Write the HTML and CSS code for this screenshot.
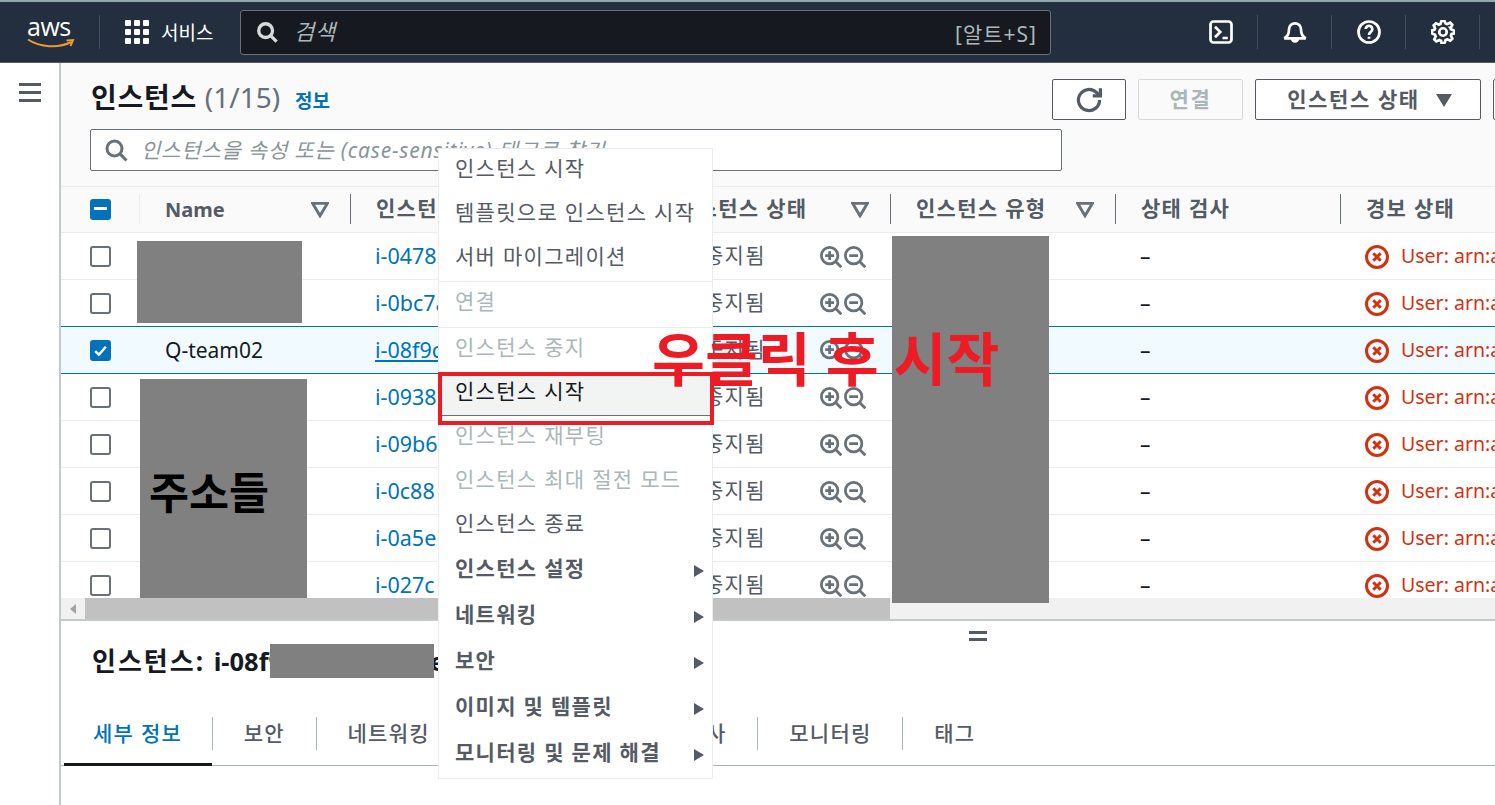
FILE: index.html
```html
<!DOCTYPE html>
<html lang="ko">
<head>
  <meta charset="UTF-8" />
  <title>인스턴스 | EC2</title>
  <link rel="stylesheet" href="styles.css">
</head>
<body>
  <svg class="icon-defs" aria-hidden="true">
    <symbol id="i-search" viewBox="0 0 16 16"><circle cx="7" cy="7" r="5" /><path d="M10.6 10.6L15 15" /></symbol>
    <symbol id="i-refresh" viewBox="0 0 16 16"><path d="M14.5 8a6.5 6.5 0 1 1-1.9-4.6L14.5 5" /><path d="M15 .8V5.5h-4.7" /></symbol>
    <symbol id="i-term" viewBox="0 0 16 16"><rect x="1" y="1" width="14" height="14" rx="2" /><path d="M4 4.500L7.500 8 4 11.500M9 12h3.500" /></symbol>
    <symbol id="i-bell" viewBox="0 0 16 16"><path d="M.8 12.200c2.200-1 3.200-3 3.200-6a4 4 0 0 1 8 0c0 3 1 5 3.200 6zM6 12.200a2 2 0 1 0 4 0" /></symbol>
    <symbol id="i-help" viewBox="0 0 16 16"><circle cx="8" cy="8" r="7" /><path d="M5.800 6a2.200 2.200 0 1 1 3.400 1.900C8.400 8.500 8 9 8 10M8 11.200v1.300" /></symbol>
    <symbol id="i-gear" viewBox="0 0 16 16"><path d="M13.300 5.200l.9-2-1.400-1.400-2 .9c-.3-.2-.7-.3-1.100-.4L9 .6H7l-.7 2.100c-.4.100-.7.200-1 .4l-2-.9-1.500 1.400.9 2c-.2.3-.3.7-.4 1L.6 7v2l2.100.8c.1.4.2.7.4 1.100l-.9 2 1.400 1.400 2-.9c.3.2.7.3 1.100.4L7 15.400h2l.8-2.100c.4-.1.7-.2 1-.4l2 .9 1.400-1.400-.9-2c.2-.3.3-.7.4-1.100L15.400 9V7l-2.100-.8c-.1-.3-.2-.7-.4-1z" /><circle cx="8" cy="8" r="2.500" /></symbol>
    <symbol id="i-zoom-in" viewBox="0 0 16 16"><circle cx="7" cy="7" r="6" /><path d="M11.500 11.500L15.500 15.500M7 3.800v6.400M3.800 7h6.400" /></symbol>
    <symbol id="i-zoom-out" viewBox="0 0 16 16"><circle cx="7" cy="7" r="6" /><path d="M11.500 11.500L15.500 15.500M3.800 7h6.400" /></symbol>
    <symbol id="i-error" viewBox="0 0 16 16"><circle cx="8" cy="8" r="7" /><path d="M5.500 5.500l5 5M10.500 5.500l-5 5" /></symbol>
    <symbol id="i-filter" viewBox="0 0 16 16"><path d="M1.500 3h13L8 14z" /></symbol>
  </svg>

  <nav class="topbar">
    <a class="logo">
      <span class="logo-text">aws</span>
      <svg class="logo-smile" viewBox="0 0 48 12"><path d="M1 1.500C13 9.500 32 10.500 44 4" /><path d="M39.500 2.500L46 2l-2.500 6" /></svg>
    </a>
    <span class="nav-sep"></span>
    <a class="services">
      <span class="dots"><i></i><i></i><i></i><i></i><i></i><i></i><i></i><i></i><i></i></span>
      <span>서비스</span>
    </a>
    <div class="global-search">
      <svg class="ico ico-22 stroke-light"><use href="#i-search" /></svg>
      <span class="global-search-text">검색</span>
      <span class="shortcut">[알트+S]</span>
    </div>
    <div class="nav-icons">
      <span class="nav-icon"><svg class="ico ico-24"><use href="#i-term" /></svg></span>
      <span class="nav-icon"><svg class="ico ico-24"><use href="#i-bell" /></svg></span>
      <span class="nav-icon"><svg class="ico ico-24"><use href="#i-help" /></svg></span>
      <span class="nav-icon"><svg class="ico ico-24"><use href="#i-gear" /></svg></span>
    </div>
  </nav>

  <div class="layout">
    <aside class="side">
      <span class="burger"><i></i><i></i><i></i></span>
    </aside>

    <main class="main">
      <section class="list-head">
        <div class="title-row">
          <div class="title-block">
            <h1>인스턴스 <span class="count">(1/15)</span></h1>
            <a class="info">정보</a>
          </div>
          <div class="actions">
            <button class="btn btn-icon"><svg class="ico ico-26 stroke-dark"><use href="#i-refresh" /></svg></button>
            <button class="btn btn-off">연결</button>
            <button class="btn btn-state">인스턴스 상태 <span class="caret"></span></button>
            <button class="btn btn-more"></button>
          </div>
        </div>
        <div class="filter-box">
          <svg class="ico ico-24 stroke-gray"><use href="#i-search" /></svg>
          <span class="filter-text">인스턴스을 속성 또는 (case-sensitive) 태그로 찾기</span>
        </div>
      </section>

      <div class="table-wrap">
        <table class="grid">
          <colgroup>
            <col class="c-check"><col class="c-name"><col class="c-id"><col class="c-state"><col class="c-wide"><col class="c-wide"><col class="c-alarm">
          </colgroup>
          <thead>
            <tr>
              <th><span class="check check-mixed"></span></th>
              <th><div class="th th-light">Name<svg class="ico ico-18 stroke-filter"><use href="#i-filter" /></svg></div></th>
              <th><div class="th">인스턴스 ID</div></th>
              <th><div class="th">인스턴스 상태<svg class="ico ico-18 stroke-filter"><use href="#i-filter" /></svg></div></th>
              <th><div class="th">인스턴스 유형<svg class="ico ico-18 stroke-filter"><use href="#i-filter" /></svg></div></th>
              <th><div class="th">상태 검사</div></th>
              <th><div class="th">경보 상태</div></th>
            </tr>
          </thead>
          <tbody>
            <tr>
              <td><span class="check"></span></td><td class="name"></td><td><a class="link">i-0478</a></td>
              <td><div class="state"><span>중지됨</span><span class="zooms"><svg class="ico ico-22 stroke-gray"><use href="#i-zoom-in" /></svg><svg class="ico ico-22 stroke-gray"><use href="#i-zoom-out" /></svg></span></div></td>
              <td></td><td class="dash">–</td>
              <td><div class="alarm"><svg class="ico ico-24 stroke-red"><use href="#i-error" /></svg>User: arn:aws:sts</div></td>
            </tr>
            <tr>
              <td><span class="check"></span></td><td class="name"></td><td><a class="link">i-0bc7a</a></td>
              <td><div class="state"><span>중지됨</span><span class="zooms"><svg class="ico ico-22 stroke-gray"><use href="#i-zoom-in" /></svg><svg class="ico ico-22 stroke-gray"><use href="#i-zoom-out" /></svg></span></div></td>
              <td></td><td class="dash">–</td>
              <td><div class="alarm"><svg class="ico ico-24 stroke-red"><use href="#i-error" /></svg>User: arn:aws:sts</div></td>
            </tr>
            <tr class="selected">
              <td><span class="check check-on"><svg viewBox="0 0 16 16"><path d="M3 8.500l3.500 3.500L13 4.500" /></svg></span></td><td class="name">Q-team02</td><td><a class="link link-on">i-08f9c0a1</a></td>
              <td><div class="state"><span>중지됨</span><span class="zooms"><svg class="ico ico-22 stroke-gray"><use href="#i-zoom-in" /></svg><svg class="ico ico-22 stroke-gray"><use href="#i-zoom-out" /></svg></span></div></td>
              <td></td><td class="dash">–</td>
              <td><div class="alarm"><svg class="ico ico-24 stroke-red"><use href="#i-error" /></svg>User: arn:aws:sts</div></td>
            </tr>
            <tr>
              <td><span class="check"></span></td><td class="name"></td><td><a class="link">i-0938</a></td>
              <td><div class="state"><span>중지됨</span><span class="zooms"><svg class="ico ico-22 stroke-gray"><use href="#i-zoom-in" /></svg><svg class="ico ico-22 stroke-gray"><use href="#i-zoom-out" /></svg></span></div></td>
              <td></td><td class="dash">–</td>
              <td><div class="alarm"><svg class="ico ico-24 stroke-red"><use href="#i-error" /></svg>User: arn:aws:sts</div></td>
            </tr>
            <tr>
              <td><span class="check"></span></td><td class="name"></td><td><a class="link">i-09b6</a></td>
              <td><div class="state"><span>중지됨</span><span class="zooms"><svg class="ico ico-22 stroke-gray"><use href="#i-zoom-in" /></svg><svg class="ico ico-22 stroke-gray"><use href="#i-zoom-out" /></svg></span></div></td>
              <td></td><td class="dash">–</td>
              <td><div class="alarm"><svg class="ico ico-24 stroke-red"><use href="#i-error" /></svg>User: arn:aws:sts</div></td>
            </tr>
            <tr>
              <td><span class="check"></span></td><td class="name"></td><td><a class="link">i-0c88</a></td>
              <td><div class="state"><span>중지됨</span><span class="zooms"><svg class="ico ico-22 stroke-gray"><use href="#i-zoom-in" /></svg><svg class="ico ico-22 stroke-gray"><use href="#i-zoom-out" /></svg></span></div></td>
              <td></td><td class="dash">–</td>
              <td><div class="alarm"><svg class="ico ico-24 stroke-red"><use href="#i-error" /></svg>User: arn:aws:sts</div></td>
            </tr>
            <tr>
              <td><span class="check"></span></td><td class="name"></td><td><a class="link">i-0a5e</a></td>
              <td><div class="state"><span>중지됨</span><span class="zooms"><svg class="ico ico-22 stroke-gray"><use href="#i-zoom-in" /></svg><svg class="ico ico-22 stroke-gray"><use href="#i-zoom-out" /></svg></span></div></td>
              <td></td><td class="dash">–</td>
              <td><div class="alarm"><svg class="ico ico-24 stroke-red"><use href="#i-error" /></svg>User: arn:aws:sts</div></td>
            </tr>
            <tr>
              <td><span class="check"></span></td><td class="name"></td><td><a class="link">i-027c</a></td>
              <td><div class="state"><span>중지됨</span><span class="zooms"><svg class="ico ico-22 stroke-gray"><use href="#i-zoom-in" /></svg><svg class="ico ico-22 stroke-gray"><use href="#i-zoom-out" /></svg></span></div></td>
              <td></td><td class="dash">–</td>
              <td><div class="alarm"><svg class="ico ico-24 stroke-red"><use href="#i-error" /></svg>User: arn:aws:sts</div></td>
            </tr>
          </tbody>
        </table>
      </div>

      <div class="hscroll">
        <span class="hscroll-btn"><i></i></span>
        <span class="hscroll-thumb"></span>
      </div>

      <section class="detail">
        <div class="drag"><i></i><i></i></div>
        <h2>인스턴스: <span class="detail-id">i-08f9c0a1b2c3d4e5f</span></h2>
        <div class="tabs">
          <a class="tab tab-on">세부 정보</a>
          <a class="tab">보안</a>
          <a class="tab">네트워킹</a>
          <a class="tab">스토리지</a>
          <a class="tab">상태 검사</a>
          <a class="tab">모니터링</a>
          <a class="tab">태그</a>
        </div>
        <h3>인스턴스 요약 정보</h3>
      </section>
    </main>
  </div>

  <div class="mask mask-a"></div>
  <div class="mask mask-b">주소들</div>
  <div class="mask mask-c"></div>
  <div class="mask mask-d"></div>

  <ul class="menu">
    <li>인스턴스 시작</li>
    <li>템플릿으로 인스턴스 시작</li>
    <li>서버 마이그레이션</li>
    <li class="sep off">연결</li>
    <li class="sep sep-short off">인스턴스 중지</li>
    <li class="hover">인스턴스 시작</li>
    <li class="off">인스턴스 재부팅</li>
    <li class="off">인스턴스 최대 절전 모드</li>
    <li>인스턴스 종료</li>
    <li class="sub">인스턴스 설정</li>
    <li class="sub">네트워킹</li>
    <li class="sub">보안</li>
    <li class="sub">이미지 및 템플릿</li>
    <li class="sub">모니터링 및 문제 해결</li>
  </ul>

  <div class="red-box"></div>
  <div class="red-note">우클릭 후 시작</div>
</body>
</html>
```

FILE: styles.css
```css
* {
  box-sizing: border-box;
}
html, body {
  margin: 0;
  height: 805px;
  overflow: hidden;
}
body {
  position: relative;
  font-family: "Noto Sans", "Noto Sans CJK KR", sans-serif;
  font-size: 21px;
  letter-spacing: 1.3px;
  color: #545b64;
  background: #fff;
}
.icon-defs {
  display: none;
}
.ico {
  flex: none;
  fill: none;
  stroke: #fff;
  stroke-width: 1.8;
}
.ico-18 { width: 18px; height: 18px; }
.ico-22 { width: 22px; height: 22px; }
.ico-24 { width: 24px; height: 24px; }
.ico-26 { width: 26px; height: 26px; }
.stroke-light { stroke: #d5dbdb; stroke-width: 2.4; }
.stroke-dark { stroke: #545b64; stroke-width: 2; }
.stroke-gray { stroke: #687078; stroke-width: 2; }
.stroke-filter { stroke: #687078; stroke-width: 2.6; }
.stroke-red { stroke: #d13212; stroke-width: 2; }

/* top nav */
.topbar {
  display: flex;
  align-items: center;
  height: 63px;
  background: #232f3e;
  border-top: 2px solid #8fa9ad;
  border-bottom: 1px solid #545b64;
  color: #fff;
}
.logo {
  display: block;
  width: 99px;
  padding-left: 27px;
  height: 36px;
}
.logo-text {
  display: block;
  font-family: "Open Sans", sans-serif;
  font-size: 25px;
  font-weight: 500;
  line-height: 24px;
  letter-spacing: -0.5px;
}
.logo-smile {
  display: block;
  width: 48px;
  height: 12px;
  fill: none;
  stroke: #ec9a2c;
  stroke-width: 2;
}
.nav-sep {
  width: 1px;
  height: 34px;
  background: #414d5c;
}
.services {
  display: flex;
  align-items: center;
  gap: 12px;
  width: 140px;
  padding-left: 25px;
  font-size: 19px;
  letter-spacing: 0;
}
.dots {
  display: grid;
  grid-template-columns: repeat(3, 6px);
  gap: 3px;
}
.dots i {
  height: 6px;
  background: #fff;
  border-radius: 1px;
}
.global-search {
  display: flex;
  align-items: center;
  width: 811px;
  height: 45px;
  padding: 0 13px 0 15px;
  background: #16191f;
  border: 1px solid #687078;
  border-radius: 3px;
}
.global-search-text {
  margin: -4px 0 0 16px;
  flex: 1;
  font-size: 22px;
  font-style: italic;
  letter-spacing: 0.8px;
  color: #aab7b8;
}
.shortcut {
  margin-top: 2px;
  letter-spacing: 1px;
  color: #aab7b8;
}
.nav-icons {
  display: flex;
  margin-left: 133px;
}
.nav-icon {
  display: flex;
  align-items: center;
  justify-content: center;
  width: 74px;
  height: 34px;
  border-right: 1px solid #414d5c;
}

/* page */
.layout {
  display: flex;
  height: 742px;
}
.side {
  flex: none;
  width: 61px;
  padding: 20px 0 0 19px;
  border-right: 2px solid #c4c9c9;
}
.burger {
  display: grid;
  width: 22px;
  gap: 5px;
}
.burger i {
  height: 3px;
  background: #545b64;
}
.main {
  flex: 1;
  min-width: 0;
  overflow: hidden;
  background: #fff;
}
.list-head {
  height: 124px;
  padding: 16px 0 0 30px;
  background: #fafafa;
  border-bottom: 1px solid #eaeded;
}
.title-row {
  display: flex;
  height: 50px;
}
.title-block {
  flex: none;
  width: 961px;
  display: flex;
  align-items: baseline;
}
h1 {
  margin: 0;
  font-size: 28px;
  font-weight: 700;
  line-height: 36px;
  letter-spacing: 0.7px;
  color: #16191f;
}
.count {
  font-weight: 400;
  letter-spacing: 0;
  color: #687078;
}
.info {
  margin-left: 15px;
  font-size: 19px;
  font-weight: 700;
  letter-spacing: 0;
  color: #0073bb;
}
.actions {
  flex: none;
  display: flex;
  gap: 12px;
  height: 41px;
}
.btn {
  height: 41px;
  padding: 0 0 3px;
  font: 700 21px "Noto Sans", "Noto Sans CJK KR", sans-serif;
  letter-spacing: 1.6px;
  color: #545b64;
  background: #fff;
  border: 1px solid #545b64;
  border-radius: 2px;
}
.btn-icon {
  display: flex;
  align-items: center;
  justify-content: center;
  width: 74px;
  padding: 0;
}
.btn-off {
  width: 105px;
  color: #aab7b8;
  background: #fafafa;
  border-color: #d5dbdb;
}
.btn-state {
  width: 226px;
  padding-left: 3px;
}
.btn-more {
  width: 60px;
}
.caret {
  display: inline-block;
  margin-left: 9px;
  border-top: 13px solid #545b64;
  border-left: 8px solid transparent;
  border-right: 8px solid transparent;
}
.filter-box {
  display: flex;
  align-items: center;
  gap: 13px;
  width: 972px;
  height: 42px;
  margin-left: -1px;
  padding-left: 13px;
  background: #fff;
  border: 1px solid #687078;
  border-radius: 2px;
}
.filter-text {
  margin-top: -2px;
  font-style: italic;
  letter-spacing: 0.8px;
  color: #879596;
  white-space: nowrap;
}

/* table */
.table-wrap {
  height: 411px;
  overflow: hidden;
}
.grid {
  width: 1500px;
  table-layout: fixed;
  border-collapse: collapse;
}
.c-check { width: 78px; }
.c-name { width: 211px; }
.c-id { width: 301px; }
.c-state { width: 239px; }
.c-wide { width: 225px; }
.c-alarm { width: 221px; }
thead tr {
  height: 45px;
  background: #fafafa;
  border-bottom: 1px solid #eaeded;
}
th {
  padding: 0;
  text-align: left;
}
th:first-child {
  padding-left: 29px;
}
td:first-child {
  padding: 2px 0 0 29px;
}
.th {
  display: flex;
  align-items: center;
  justify-content: space-between;
  height: 30px;
  padding: 0 21px 4px 25px;
  border-left: 1px solid #687078;
  font-weight: 700;
  color: #545b64;
  white-space: nowrap;
}
.th svg {
  margin-top: 4px;
}
.th-light {
  padding-bottom: 0;
  border-left-color: #eaeded;
  font-size: 20px;
  letter-spacing: 0;
}
.th-light svg {
  margin-top: 0;
}
tbody tr {
  height: 47px;
  border-bottom: 1px solid #eaeded;
}
td {
  padding: 0 0 0 25px;
  white-space: nowrap;
  overflow: hidden;
}
td.name {
  padding-left: 26px;
  letter-spacing: 0;
  color: #16191f;
}
td.dash {
  letter-spacing: 0;
  color: #16191f;
}
tr:has(+ .selected) {
  border-bottom-color: #0073bb;
}
tr.selected {
  background: #f1faff;
  border-bottom: 1px solid #0073bb;
}
.check {
  display: block;
  width: 21px;
  height: 21px;
  background: #fff;
  border: 2px solid #687078;
  border-radius: 3px;
}
.check-on, .check-mixed {
  background: #0073bb;
  border-color: #0073bb;
}
.check-on svg {
  display: block;
  fill: none;
  stroke: #fff;
  stroke-width: 2.4;
}
.check-mixed {
  padding: 6px 2px;
}
.check-mixed::before {
  content: "";
  display: block;
  height: 3px;
  background: #fff;
}
.link {
  font-size: 21.5px;
  letter-spacing: 0;
  color: #0073bb;
}
.link-on {
  text-decoration: underline;
}
.state {
  display: flex;
  align-items: center;
  justify-content: space-between;
  padding: 0 24px 0 28px;
  color: #545b64;
}
.state > span:first-child {
  margin-bottom: 4px;
}
.zooms {
  display: flex;
  gap: 2px;
  margin-top: 2px;
}
.alarm {
  display: flex;
  align-items: center;
  gap: 12px;
  font-size: 19.5px;
  letter-spacing: 0;
  color: #d13212;
}
.alarm svg {
  margin-top: 2px;
}

.hscroll {
  display: flex;
  height: 23px;
  background: #f1f1f1;
  border-bottom: 2px solid #c4c9c9;
}
.hscroll-btn {
  display: flex;
  align-items: center;
  justify-content: center;
  width: 24px;
}
.hscroll-btn i {
  border-right: 6px solid #a3a3a3;
  border-top: 5px solid transparent;
  border-bottom: 5px solid transparent;
}
.hscroll-thumb {
  width: 805px;
  background: #c1c1c1;
}

/* bottom panel */
.detail {
  padding-top: 10px;
}
.drag {
  display: grid;
  gap: 4px;
  width: 18px;
  margin-left: 908px;
}
.drag i {
  height: 3px;
  background: #545b64;
}
h2 {
  margin: 2px 0 0 31px;
  font-size: 26px;
  font-weight: 700;
  line-height: 36px;
  letter-spacing: 2px;
  color: #16191f;
}
.detail-id {
  font-size: 25.5px;
  letter-spacing: 0;
}
.tabs {
  display: flex;
  height: 50px;
  margin-top: 37px;
  padding-left: 3px;
  border-bottom: 1px solid #aab7b8;
}
.tab {
  height: 33px;
  margin-top: 1px;
  padding: 0 30.75px;
  border-left: 1px solid #aab7b8;
  line-height: 32px;
  font-weight: 500;
  white-space: nowrap;
}
.tab-on {
  width: 148px;
  padding: 0 0 0 29px;
  border-left: 0;
  color: #0073bb;
  height: 49px;
  border-bottom: 3px solid #16191f;
}
h3 {
  margin: 34px 0 0 31px;
  font-size: 22px;
  line-height: 30px;
  color: #16191f;
}

/* context menu and annotations sit over the page */
.mask {
  position: absolute;
  background: #808080;
}
.mask-a { left: 137px; top: 241px; width: 165px; height: 82px; }
.mask-b {
  left: 140px; top: 379px; width: 167px; height: 219px;
  padding: 83px 0 0 9px;
  font-size: 43.500px;
  font-weight: 700;
  line-height: 60px;
  letter-spacing: 0;
  color: #000;
}
.mask-c { left: 892px; top: 236px; width: 157px; height: 367px; }
.mask-d { left: 270px; top: 644px; width: 164px; height: 34px; }

.menu {
  position: absolute;
  left: 438px;
  top: 148px;
  width: 275px;
  height: 631px;
  margin: 0;
  padding: 0;
  list-style: none;
  background: #fff;
  border: 1px solid #eaeded;
}
.menu li {
  height: 44px;
  padding: 0 16px;
  line-height: 38px;
  white-space: nowrap;
}
.menu .hover, .menu .hover ~ li {
  line-height: 39px;
}
.menu .sep {
  height: 46px;
  border-top: 1px solid #eaeded;
}
.menu .sep-short {
  height: 45px;
}
.menu .off {
  color: #aab7b8;
}
.menu .hover {
  color: #16191f;
  background: #f2f3f3;
  border-bottom: 1px solid #687078;
}
.menu .sub {
  display: flex;
  justify-content: space-between;
  align-items: center;
  height: 46px;
  padding: 0 8px 6px 16px;
  font-weight: 700;
  line-height: 30px;
}
.menu .sub::after {
  content: "";
  margin-top: 6px;
  border-left: 10px solid #545b64;
  border-top: 6px solid transparent;
  border-bottom: 6px solid transparent;
}
.red-box {
  position: absolute;
  left: 438px;
  top: 372px;
  width: 276px;
  height: 53px;
  border: 4px solid #ed1c24;
}
.red-note {
  position: absolute;
  left: 652px;
  top: 319px;
  font-size: 57.500px;
  font-weight: 700;
  line-height: 80px;
  letter-spacing: 0;
  color: #ed1c24;
  white-space: nowrap;
}
```
